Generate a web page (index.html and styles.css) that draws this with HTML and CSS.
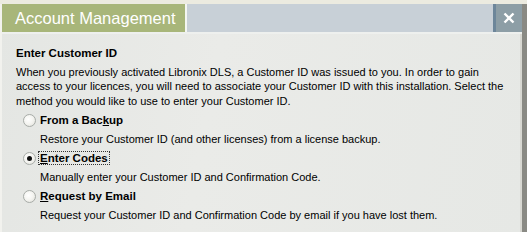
FILE: index.html
```html
<!DOCTYPE html>
<html>
<head>
<meta charset="utf-8">
<link rel="stylesheet" href="styles.css">
</head>
<body>
<div class="window">
  <div class="titlebar">
    <div class="title-tab">Account Management</div>
    <div class="title-sep"></div>
    <div class="title-fill"></div>
    <div class="title-stripe"></div>
    <div class="title-close">
      <svg width="12" height="12" viewBox="0 0 12 12"><path d="M1.5 1.5 L10.5 10.5 M10.5 1.5 L1.5 10.5" stroke="#fff" stroke-width="2.4"/></svg>
    </div>
  </div>
  <div class="content">
    <h1 class="heading">Enter Customer ID</h1>
    <p class="intro">When you previously activated Libronix DLS, a Customer ID was issued to you. In order to gain access to your licences, you will need to associate your Customer ID with this installation. Select the method you would like to use to enter your Customer ID.</p>
    <div class="options">
      <div class="option">
        <div class="option-row"><span class="radio"></span><span class="label">From a Bac<u>k</u>up</span></div>
        <div class="desc">Restore your Customer ID (and other licenses) from a license backup.</div>
      </div>
      <div class="option">
        <div class="option-row"><span class="radio checked"></span><span class="label focus"><u>E</u>nter Codes</span></div>
        <div class="desc">Manually enter your Customer ID and Confirmation Code.</div>
      </div>
      <div class="option">
        <div class="option-row"><span class="radio"></span><span class="label"><u>R</u>equest by Email</span></div>
        <div class="desc">Request your Customer ID and Confirmation Code by email if you have lost them.</div>
      </div>
    </div>
  </div>
</div>
</body>
</html>
```
FILE: styles.css
```css
html, body {
  margin: 0;
  padding: 0;
  width: 527px;
  height: 232px;
  overflow: hidden;
  background: #ecebe0;
}
.window {
  margin-top: 4px;
  height: 228px;
  border-left: 2px solid #f2f2ee;
  border-right: 5px solid #8a8a84;
  box-shadow: inset -2px 0 0 #d8d8d2;
  background: linear-gradient(100deg, #e4e6e3 0%, #eaebe8 40%, #e6e8e5 100%);
  display: flex;
  flex-direction: column;
  font-family: "Liberation Sans", sans-serif;
}
.titlebar {
  display: flex;
  height: 28px;
  border-bottom: 2px solid #eef0ee;
}
.title-tab {
  width: 170px;
  padding-left: 13px;
  background: #a8b67a;
  color: #fff;
  font-family: "Liberation Sans", Arial, sans-serif;
  font-size: 16.5px;
  line-height: 29px;
  white-space: nowrap;
}
.title-sep { width: 2px; background: #f4f6f2; }
.title-fill { flex: 1; background: #c8d0d7; }
.title-stripe { width: 3px; background: #6d869a; }
.title-close {
  width: 26px;
  background: #8d9ea6;
  display: flex;
  align-items: center;
  justify-content: center;
}
.content {
  padding: 12px 10px 0 14px;
  font-size: 11px;
  color: #000;
}
.heading {
  margin: 0;
  font-size: 11.5px;
  font-weight: bold;
  line-height: 14px;
}
.intro {
  margin: 4.5px 0 0;
  line-height: 14.5px;
  font-size: 11px;
}
.options { margin-top: 2px; }
.option-row {
  display: flex;
  align-items: center;
  height: 20px;
  padding-left: 7px;
}
.radio {
  width: 11px;
  height: 11px;
  border: 1px solid #a8aca8;
  border-radius: 50%;
  background: radial-gradient(circle at 40% 40%, #ffffff 0%, #f4f4f0 50%, #dcdcd6 100%);
  position: relative;
  margin-right: 2px;
}
.radio.checked::after {
  content: "";
  position: absolute;
  left: 3px;
  top: 3px;
  width: 5px;
  height: 5px;
  border-radius: 50%;
  background: #111;
}
.label {
  font-weight: bold;
  font-size: 11.5px;
  padding: 0 1px;
  border: 1px dotted transparent;
}
.label.focus { border-color: #333; }
.desc {
  padding-left: 24px;
  height: 18px;
  line-height: 18px;
  font-size: 11px;
}
```
